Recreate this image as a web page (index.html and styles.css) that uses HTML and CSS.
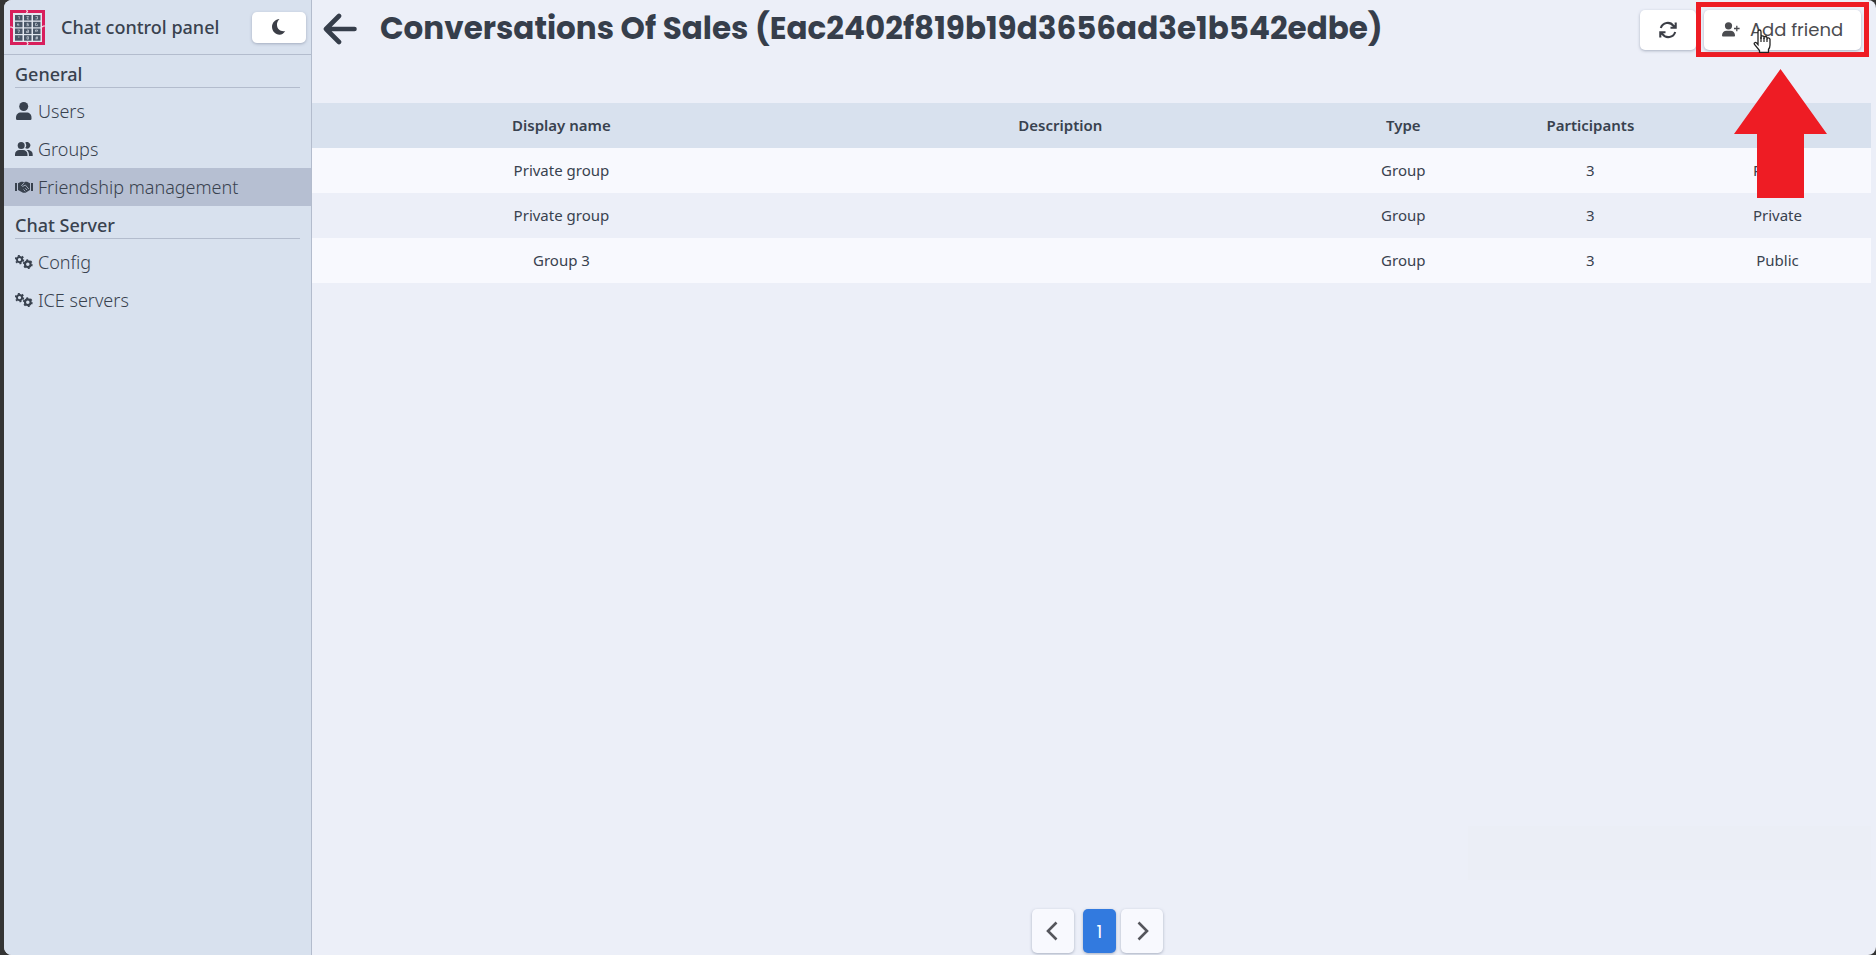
FILE: index.html
```html
<!DOCTYPE html>
<html lang="en">
<head>
<meta charset="utf-8">
<title>Chat control panel</title>
<link rel="stylesheet" href="styles.css">
</head>
<body>
<svg class="sprite" aria-hidden="true">
  <symbol id="gears" viewBox="0 0 18 14">
    <circle cx="4.5" cy="4.6" r="2.6" fill="none" stroke="currentColor" stroke-width="1.9"/>
    <circle cx="4.5" cy="4.6" r="3.9" fill="none" stroke="currentColor" stroke-width="1.6" stroke-dasharray="1.9 2.18"/>
    <circle cx="12.8" cy="9.2" r="2.8" fill="none" stroke="currentColor" stroke-width="2.1"/>
    <circle cx="12.8" cy="9.2" r="4.1" fill="none" stroke="currentColor" stroke-width="1.6" stroke-dasharray="2 2.29"/>
  </symbol>
</svg>
<div class="app">
  <aside class="sidebar">
    <header class="brand">
      <svg class="logo" viewBox="0 0 35 35" aria-hidden="true">
        <rect x="1.5" y="1.5" width="32" height="32" fill="#e2e7ef" stroke="#d81f5c" stroke-width="3"/>
        <path d="M16.5 0l1 1.5-1 1.500 1 1.500M18 30.500l-1 1.500 1 1.500-1 1.500M0 17h1.500l1.500 1h1.500M30.500 17h1.500l1.500-1H35" fill="none" stroke="#f3dfe8" stroke-width="1.200"/>
        <g fill="#4a5768">
          <rect x="5" y="5" width="7.500" height="5.500"/><rect x="14" y="5" width="7.500" height="5.500"/><rect x="23" y="5" width="7.500" height="5.500"/>
          <rect x="5" y="11.800" width="7.500" height="5.500"/><rect x="14" y="11.800" width="7.500" height="5.500"/><rect x="23" y="11.800" width="7.500" height="5.500"/>
          <rect x="5" y="18.500" width="7.500" height="5.500"/><rect x="14" y="18.500" width="7.500" height="5.500"/><rect x="23" y="18.500" width="7.500" height="5.500"/>
          <rect x="5" y="25.200" width="7.500" height="5.500"/><rect x="14" y="25.200" width="7.500" height="5.500"/><rect x="23" y="25.200" width="7.500" height="5.500"/>
        </g>
        <path d="M8.300 6.500h1v2.800M16.500 6.500h2l-1.500 2.500h2M25.500 6.500h2v2.500h-2M8 15.500V13.500l-.5 1.500h2M18.500 13.300h-1.500v1.200h1.500v1.200h-2M27 13.300h-1.500v2.300h2v-1.200M7.500 20h2l-1 3M17 20h1.500v2.500h-2v-1.200h2M25.500 21.200h2v-1.200h-2v1.500M8 27h1.500M17 26.700h1.500v2.500h-1.500zM25.500 28h2.500M26.500 26.500l-.5 3M27.500 26.500l-.5 3" fill="none" stroke="#dfe5ee" stroke-width=".6"/>
      </svg>
      <span class="brand-name">Chat control panel</span>
      <button class="button theme" type="button" aria-label="Toggle theme">
        <svg width="14" height="16" viewBox="0 0 14 16" aria-hidden="true"><path d="M7.500 0C5.600 2 4.800 4 5 6.300c.3 4 3.700 6.600 8.200 5.700C11.900 14.300 9.900 15.700 7.600 15.700 3.300 15.700 0 12.200 0 7.800 0 3.700 3.300.2 7.500 0z" fill="currentColor"/></svg>
      </button>
    </header>
    <nav class="nav">
      <h2 class="nav-title">General</h2>
      <a class="nav-link" href="#users">
        <svg class="nav-icon" width="18" height="18" viewBox="0 0 18 18" aria-hidden="true"><circle cx="8.700" cy="4.500" r="4.500" fill="currentColor"/><path d="M1 15.500C1 12.500 3 10.500 6 10.500h5.500c3 0 5 2 5 5v1.200q0 1.300-1.200 1.300H2.200Q1 18 1 16.700z" fill="currentColor"/></svg>
        Users</a>
      <a class="nav-link" href="#groups">
        <svg class="nav-icon" width="18" height="14" viewBox="0 0 18 14" aria-hidden="true"><g fill="currentColor"><circle cx="6.200" cy="3.500" r="3.500"/><path d="M10.200.6a3.300 3.300 0 1 1 0 5.500A4.500 4.500 0 0 0 10.200.6zM0 12.500C0 9.700 2 8 4.500 8H8c2.500 0 4.500 1.700 4.500 4.500V14H0zM11.500 8h1.200c2.800 0 5 1.700 5 4.500V14h-3.800v-1.500C13.900 10.600 13 9 11.500 8z"/></g></svg>
        Groups</a>
      <a class="nav-link active" href="#friendship" aria-current="page">
        <svg class="nav-icon" width="18" height="12" viewBox="0 0 18 12" aria-hidden="true"><g fill="currentColor"><path d="M0 2h2v8H0zM16 2h2v8h-2z"/><path d="M3 2.200L6 .8h2L9 1.500l1-.7h2l3 1.400V9L10.500 11.700H8L3 9z"/></g><path d="M9.300 1.800L6.500 4.500Q7.500 6 9 4.800L10.300 4 13.800 8M8.500 8.500l1.800 1.800M10.300 7.300l1.700 1.700" fill="none" stroke="#b6bfd2" stroke-width=".8"/></svg>
        Friendship management</a>
      <h2 class="nav-title">Chat Server</h2>
      <a class="nav-link" href="#config"><svg class="nav-icon" width="18" height="14" aria-hidden="true"><use href="#gears"/></svg>Config</a>
      <a class="nav-link" href="#ice"><svg class="nav-icon" width="18" height="14" aria-hidden="true"><use href="#gears"/></svg>ICE servers</a>
    </nav>
  </aside>
  <main class="main">
    <header class="page-head">
      <a class="back" href="#back" aria-label="Back"><svg width="34" height="32" viewBox="0 0 34 32" aria-hidden="true"><path d="M16 3L3 16l13 13M3 16h28.500" fill="none" stroke="currentColor" stroke-width="4.600" stroke-linecap="round" stroke-linejoin="round"/></svg></a>
      <h1 class="title">Conversations Of Sales (Eac2402f819b19d3656ad3e1b542edbe)</h1>
      <div class="actions">
        <button class="button refresh" type="button" aria-label="Refresh"><svg width="18" height="18" viewBox="0 0 18 18" aria-hidden="true"><path d="M1.800 7A7.200 7.200 0 0 1 14.500 4.800L16.500 6.700M16.700 1.500V6.700H11.500M16.200 11A7.200 7.200 0 0 1 3.500 13.200L1.500 11.300M1.300 16.500V11.300H6.500" fill="none" stroke="currentColor" stroke-width="2.100"/></svg></button>
        <div class="callout">
          <button class="button add" type="button">
            <svg width="18" height="15" viewBox="0 0 18 15" aria-hidden="true"><g fill="currentColor"><circle cx="6.500" cy="3.800" r="3.600"/><path d="M0 13.500C0 10.500 2 8.800 4.500 8.800h4c2.500 0 4.500 1.700 4.500 4.700 0 .7-.4 1-1 1H1q-1 0-1-1z"/></g><path d="M14.800 3.700v5.600M12 6.500h5.600" stroke="currentColor" stroke-width="1.300"/></svg>
            <span>Add friend</span>
          </button>
          <svg class="pointer" width="20" height="24" viewBox="0 0 20 24" aria-hidden="true"><path d="M5 14V2.700Q5 1 6.500 1T8 2.700V10 7.800Q8 6.800 9.500 6.800T11 8v2V8.500Q11 7.500 12.500 7.500T14 9v1.500V9.700Q14 8.800 15.300 8.800T17 10.200V16Q17 18.500 15.500 20.500V23.500H6.500V21.500L1.500 15.500Q.7 14 2 13.500 3 13 5 15.500z" fill="#fff" stroke="#222" stroke-width="1.300"/><path d="M8 8v5M11 9v4M14 10v3" stroke="#222" stroke-width="1.200"/></svg>
          <svg class="arrow" width="93" height="129" viewBox="0 0 93 129" aria-hidden="true"><path d="M46.500 0L93 65H70V129H23V65H0z" fill="#ee1c24"/></svg>
        </div>
      </div>
    </header>
    <table class="grid">
      <colgroup><col class="wide"><col class="wide"><col><col><col></colgroup>
      <thead><tr><th>Display name</th><th>Description</th><th>Type</th><th>Participants</th><th aria-label="Visibility"></th></tr></thead>
      <tbody>
        <tr><td>Private group</td><td></td><td>Group</td><td>3</td><td>Private</td></tr>
        <tr><td>Private group</td><td></td><td>Group</td><td>3</td><td>Private</td></tr>
        <tr><td>Group 3</td><td></td><td>Group</td><td>3</td><td>Public</td></tr>
      </tbody>
    </table>
    <nav class="pager" aria-label="Pages">
      <button class="button page step" type="button" aria-label="Previous page"><svg width="14" height="20" viewBox="0 0 14 20" aria-hidden="true"><path d="M10.500 1.500L2 10l8.500 8.500" fill="none" stroke="#55565c" stroke-width="2.600"/></svg></button>
      <button class="button page current" type="button" aria-current="page">1</button>
      <button class="button page step" type="button" aria-label="Next page"><svg width="14" height="20" viewBox="0 0 14 20" aria-hidden="true"><path d="M3.500 1.500L12 10l-8.500 8.500" fill="none" stroke="#55565c" stroke-width="2.600"/></svg></button>
    </nav>
    <div class="toast"></div>
  </main>
</div>
</body>
</html>
```
FILE: styles.css
```css
* { box-sizing: border-box; }

body {
  margin: 0;
  background: #343434;
  color: #39424f;
  font-family: "Noto Sans", sans-serif;
  font-size: 15px;
}

.sprite { position: absolute; width: 0; height: 0; }

.app {
  display: flex;
  min-height: 100vh;
  margin-left: 4px;
  border-radius: 8px;
  overflow: hidden;
  background: #eceff8;
}

.sidebar {
  flex: 0 0 308px;
  background: #d8e1ee;
  border-right: 1px solid #b3bccd;
}

.brand {
  display: flex;
  align-items: center;
  height: 55px;
  padding: 0 5px 0 6px;
  border-bottom: 1px solid #b3bccd;
}

.logo { width: 35px; height: 35px; }

.brand-name {
  flex: 1;
  padding-left: 16px;
  font-size: 18px;
  font-weight: 500;
}

.button {
  display: inline-flex;
  align-items: center;
  justify-content: center;
  padding: 0;
  border: 0;
  border-radius: 5px;
  background: #fff;
  box-shadow: 0 1px 3px #8b94a8b0;
  color: #3b3e46;
  font: inherit;
}

.theme { width: 54px; height: 31px; }

.nav-title {
  height: 33px;
  margin: 0 11px 4px;
  border-bottom: 1px solid #b3bccd;
  font-size: 18px;
  font-weight: 500;
  line-height: 38px;
}

.nav-link {
  display: flex;
  align-items: center;
  gap: 5px;
  height: 38px;
  padding: 0 11px;
  color: inherit;
  font-size: 18px;
  font-weight: 300;
  text-decoration: none;
}

.active { background: #b6bfd2; }

.main {
  position: relative;
  display: flex;
  flex: 1;
  flex-direction: column;
  min-width: 0;
  padding-right: 5px;
}

.page-head {
  display: flex;
  align-items: flex-start;
  height: 103px;
  padding-right: 2px;
}

.back {
  display: flex;
  align-items: center;
  height: 58px;
  padding-left: 11px;
  color: #363e4b;
}

.title {
  flex: 1;
  margin: 0;
  padding-left: 23px;
  color: #363e4b;
  font-family: Poppins, Inter, sans-serif;
  font-size: 31px;
  font-weight: 700;
  line-height: 56px;
  white-space: nowrap;
}

.actions { display: flex; padding-top: 2px; }

.refresh { width: 56px; height: 40px; margin-top: 8px; }

.callout {
  position: relative;
  height: 55px;
  padding: 3px;
  border: 5px solid #ee1c24;
}

.add {
  gap: 10px;
  width: 157px;
  height: 40px;
  padding-bottom: 1px;
  color: #4b4c50;
  font-family: Poppins, Inter, sans-serif;
  font-size: 18px;
}

.pointer { position: absolute; top: 22px; left: 52px; }
.arrow { position: absolute; top: 62px; left: 33px; }

.grid {
  width: 100%;
  border-collapse: collapse;
  table-layout: fixed;
  text-align: center;
}

.wide { width: 32%; }
.grid th, .grid td { height: 45px; padding: 0 0 2px; }
.grid th { font-weight: 600; }
.grid thead { background: #d8e1ee; }
.grid tbody tr:nth-child(odd) { background: #f8f9fe; }

.pager {
  display: flex;
  justify-content: center;
  gap: 5px;
  margin-top: auto;
  padding: 0 0 2px 12px;
}

.page { height: 44px; }
.step { width: 42px; background: #f8f9fe; }
.current {
  width: 33px;
  margin-left: 4px;
  background: #327adf;
  color: #fff;
  font-family: Poppins, Inter, sans-serif;
  font-size: 18px;
}

.toast {
  position: absolute;
  right: 5px;
  bottom: 75px;
  width: 403px;
  height: 54px;
  background: #ebeef6;
}
```
